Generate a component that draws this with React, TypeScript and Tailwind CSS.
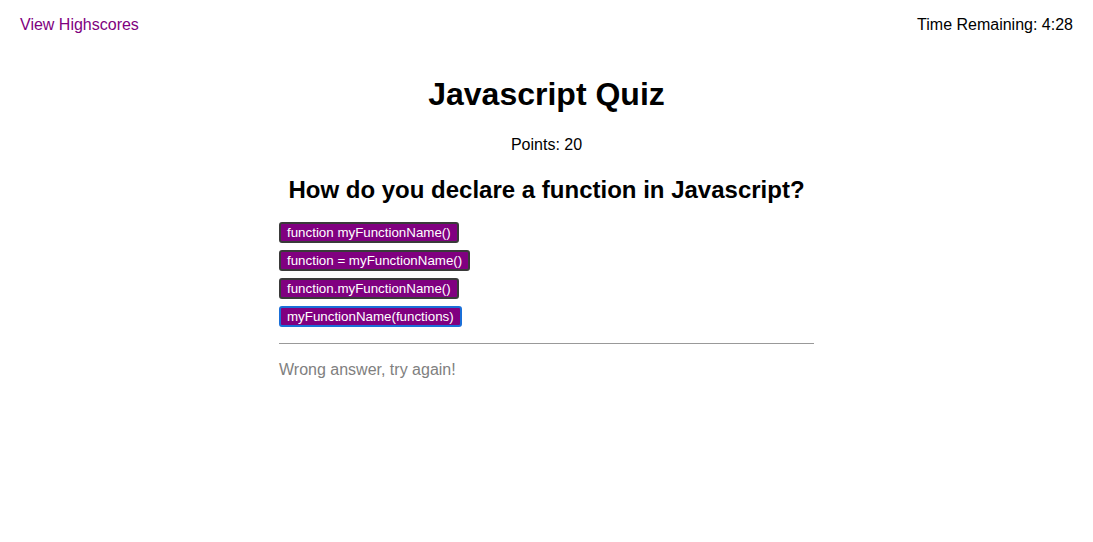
const answers = [
  "function myFunctionName()",
  "function = myFunctionName()",
  "function.myFunctionName()",
  "myFunctionName(functions)",
];

export default function App() {
  return (
    <div className="min-h-screen bg-white text-black font-['Liberation_Sans',Arial,sans-serif]">
      <header className="flex justify-between px-5 pt-[15px]">
        <a className="text-[16px] leading-[20px] text-[#800080]">View Highscores</a>
        <span className="text-[16px] leading-[20px]">Time Remaining: 4:28</span>
      </header>

      <main className="mx-auto w-[535px]">
        <h1 className="mt-[41px] text-center text-[32px] font-bold leading-[37px]">Javascript Quiz</h1>
        <p className="mt-[23px] text-center text-[16px] leading-[18px]">Points: 20</p>
        <h2 className="mt-[22px] text-center text-[24px] font-bold leading-[28px]">
          How do you declare a function in Javascript?
        </h2>

        <div className="mt-[18px] flex flex-col items-start gap-[7px]">
          {answers.map((a, i) => (
            <button
              key={a}
              className={`h-[21px] rounded-[3px] border-2 bg-[#800080] px-[6px] text-[13.33px] leading-[15px] text-white ${
                i === 3 ? "border-[#1a6fd8]" : "border-[#3a3a3a]"
              }`}
            >
              {a}
            </button>
          ))}
        </div>

        <hr className="mt-[16px] border-t border-[#999]" />
        <p className="mt-[17px] text-[16px] leading-[18px] text-[#808080]">Wrong answer, try again!</p>
      </main>
    </div>
  );
}
